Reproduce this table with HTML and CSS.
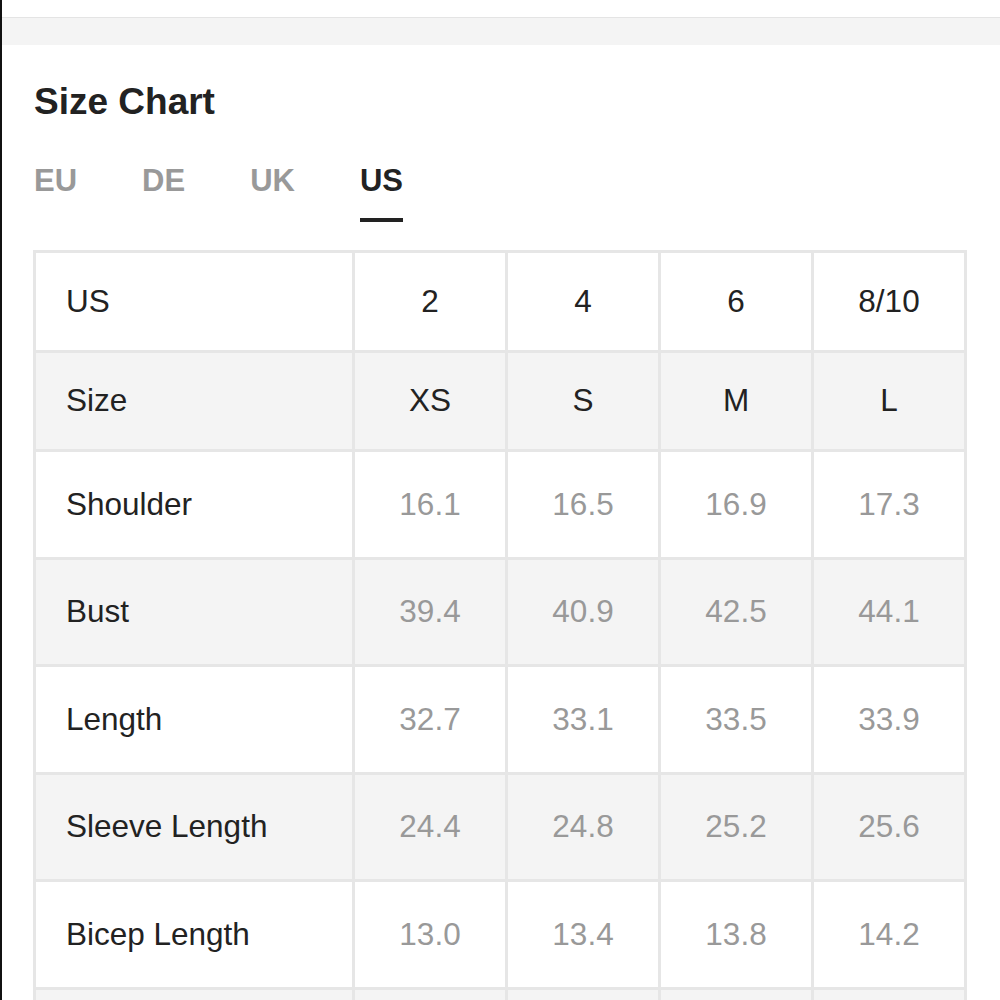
FILE: index.html
```html
<!DOCTYPE html>
<html>
<head>
<meta charset="utf-8">
<link rel="stylesheet" href="styles.css">
</head>
<body>
<div class="page">
  <div class="topbar"></div>
  <div class="content">
    <h1 class="title">Size Chart</h1>
    <div class="tabs">
      <span class="tab">EU</span>
      <span class="tab">DE</span>
      <span class="tab">UK</span>
      <span class="tab active">US</span>
    </div>
    <table class="chart">
      <colgroup>
        <col class="c-label"><col class="c-val"><col class="c-val"><col class="c-val"><col class="c-val">
      </colgroup>
      <tr class="head"><td>US</td><td>2</td><td>4</td><td>6</td><td>8/10</td></tr>
      <tr class="head alt"><td>Size</td><td>XS</td><td>S</td><td>M</td><td>L</td></tr>
      <tr class="data"><td>Shoulder</td><td>16.1</td><td>16.5</td><td>16.9</td><td>17.3</td></tr>
      <tr class="data alt"><td>Bust</td><td>39.4</td><td>40.9</td><td>42.5</td><td>44.1</td></tr>
      <tr class="data"><td>Length</td><td>32.7</td><td>33.1</td><td>33.5</td><td>33.9</td></tr>
      <tr class="data alt"><td>Sleeve Length</td><td>24.4</td><td>24.8</td><td>25.2</td><td>25.6</td></tr>
      <tr class="data"><td>Bicep Length</td><td>13.0</td><td>13.4</td><td>13.8</td><td>14.2</td></tr>
      <tr class="data alt"><td></td><td></td><td></td><td></td><td></td></tr>
    </table>
  </div>
</div>
</body>
</html>
```

FILE: styles.css
```css
html, body {
  margin: 0;
  padding: 0;
  background: #fff;
}
body {
  font-family: "Liberation Sans", Arial, Helvetica, sans-serif;
  color: #222;
}
.page {
  border-left: 2px solid #111;
  box-sizing: border-box;
  overflow: hidden;
  height: 1000px;
}
.topbar {
  margin-top: 17px;
  height: 28px;
  background: #f4f4f4;
  border-top: 1px solid #e4e4e4;
  box-sizing: border-box;
}
.content {
  padding-left: 32px;
}
.title {
  margin: 37px 0 0 0;
  font-size: 37px;
  line-height: 40px;
  font-weight: bold;
  color: #222;
}
.tabs {
  display: flex;
  gap: 65px;
  margin-top: 41px;
}
.tab {
  font-size: 31px;
  line-height: 36px;
  font-weight: bold;
  color: #999;
  padding-bottom: 19px;
  border-bottom: 4px solid transparent;
}
.tab.active {
  color: #222;
  border-bottom-color: #222;
}
.chart {
  margin-top: 28px;
  margin-left: -1px;
  border-collapse: collapse;
  table-layout: fixed;
  width: 931px;
  font-size: 31.5px;
}
.c-label { width: 319px; }
.c-val { width: 153px; }
.chart td {
  border: 3px solid #e6e6e6;
  padding: 0;
  text-align: center;
  vertical-align: middle;
  color: #999;
}
.chart td:first-child {
  text-align: left;
  padding-left: 30px;
  color: #222;
}
.chart tr.head td {
  color: #222;
}
.chart tr.head { height: 99.5px; }
.chart tr.data { height: 107.5px; }
.chart tr.alt td { background: #f4f4f4; }
```
